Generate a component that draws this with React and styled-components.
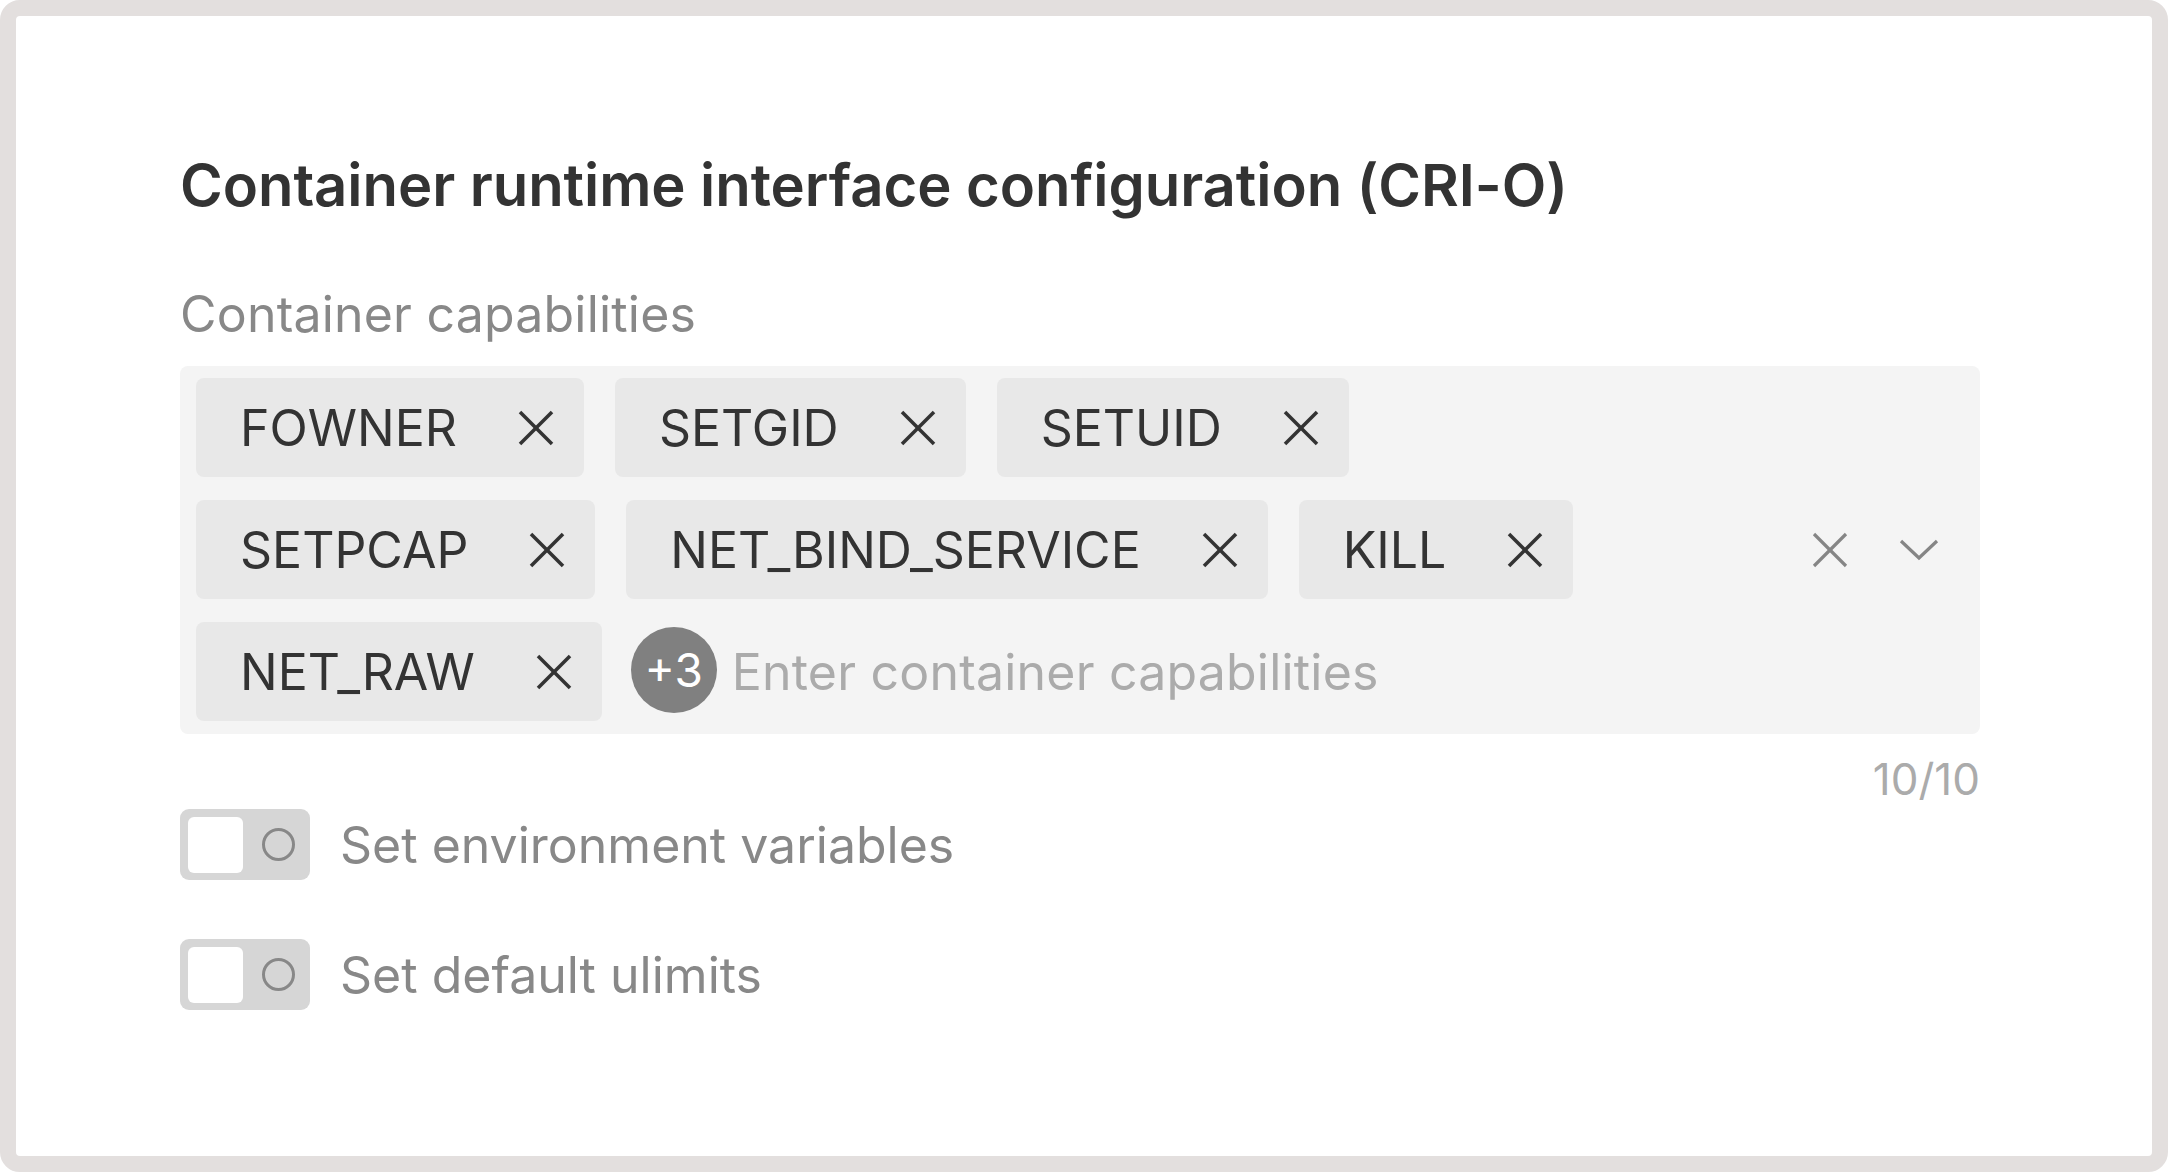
import React from 'react'
import styled, { createGlobalStyle } from 'styled-components'

const GlobalStyle = createGlobalStyle`
  html, body {
    margin: 0;
    padding: 0;
    background: #ffffff;
  }
  body {
    font-family: "Inter", "Noto Sans", sans-serif;
  }
  * {
    box-sizing: border-box;
  }
`

const Frame = styled.div`
  width: 2168px;
  height: 1172px;
  border: 16px solid #e3dfde;
  border-radius: 20px;
  background: #ffffff;
  padding: 140px 172px 0 164px;
  display: flex;
  flex-direction: column;
`

const Title = styled.h2`
  margin: 0;
  font-size: 58px;
  line-height: 58px;
  font-weight: 600;
  color: #333333;
  letter-spacing: -0.05px;
`

const FieldLabel = styled.label`
  margin-top: 75px;
  font-size: 50px;
  line-height: 50px;
  color: #888888;
  letter-spacing: 0.2px;
`

const SelectBox = styled.div`
  margin-top: 27px;
  display: flex;
  align-items: center;
  background: #f4f4f4;
  border-radius: 8px;
  padding: 12px 0 13px 16px;
`

const TagArea = styled.div`
  flex: 1;
  display: flex;
  flex-wrap: wrap;
  row-gap: 23px;
  column-gap: 31px;
`

const Tag = styled.div`
  height: 99px;
  display: flex;
  align-items: center;
  gap: 61px;
  padding: 0 30px 0 44px;
  background: #e8e8e8;
  border-radius: 8px;
  font-size: 50px;
  color: #333333;
  white-space: nowrap;
`

const InputGroup = styled.div`
  flex: 1 1 740px;
  display: flex;
  align-items: center;
  gap: 15px;
  height: 99px;
  margin-left: -2px;
`

const MoreBadge = styled.span`
  flex: none;
  width: 86px;
  height: 86px;
  border-radius: 50%;
  background: #808080;
  color: #ffffff;
  font-size: 46px;
  display: flex;
  align-items: center;
  justify-content: center;
  margin-top: -4px;
`

const TextInput = styled.input`
  flex: 1;
  min-width: 0;
  border: none;
  outline: none;
  background: transparent;
  font-family: inherit;
  font-size: 50px;
  letter-spacing: 0.2px;
  color: #333333;
  padding: 0;

  &::placeholder {
    color: #ababab;
  }
`

const Indicators = styled.div`
  flex: none;
  display: flex;
  align-items: center;
  gap: 51px;
  padding: 0 41px 0 50px;
`

const IconButton = styled.button`
  border: none;
  background: none;
  padding: 0;
  display: flex;
  cursor: pointer;
  color: ${p => p.$muted ? '#858585' : '#333333'};
`

const Counter = styled.div`
  margin-top: 23px;
  align-self: flex-end;
  font-size: 44px;
  line-height: 44px;
  color: #ababab;
`

const SwitchRow = styled.label`
  display: flex;
  align-items: center;
  gap: 30px;
  margin-top: ${p => p.$first ? '8px' : '59px'};
  font-size: 50px;
  color: #888888;
`

const Track = styled.span`
  width: 130px;
  height: 71px;
  border-radius: 9px;
  background: #d6d6d6;
  display: flex;
  align-items: center;
  justify-content: space-between;
  padding: 0 15px 0 8px;
`

const Knob = styled.span`
  width: 55px;
  height: 56px;
  border-radius: 6px;
  background: #ffffff;
`

const OffMark = styled.span`
  width: 33px;
  height: 33px;
  border-radius: 50%;
  border: 3px solid #888888;
`

function Cross({ size = 36, width = 3.6 }) {
  return (
    <svg width={size} height={size} viewBox="0 0 36 36" fill="none" stroke="currentColor" strokeWidth={width}>
      <line x1="2" y1="2" x2="34" y2="34" />
      <line x1="34" y1="2" x2="2" y2="34" />
    </svg>
  )
}

function Chevron() {
  return (
    <svg width="40" height="22" viewBox="0 0 40 22" fill="none" stroke="currentColor" strokeWidth="3.2">
      <polyline points="2,2 20,19 38,2" />
    </svg>
  )
}

const capabilities = ['FOWNER', 'SETGID', 'SETUID', 'SETPCAP', 'NET_BIND_SERVICE', 'KILL', 'NET_RAW']

function Switch({ label, first }) {
  return (
    <SwitchRow $first={first}>
      <Track>
        <Knob />
        <OffMark />
      </Track>
      {label}
    </SwitchRow>
  )
}

export default function App() {
  return (
    <>
      <GlobalStyle />
      <Frame>
        <Title>Container runtime interface configuration (CRI-O)</Title>
        <FieldLabel>Container capabilities</FieldLabel>
        <SelectBox>
          <TagArea>
            {capabilities.map(cap => (
              <Tag key={cap}>
                {cap}
                <IconButton aria-label={`Remove ${cap}`}>
                  <Cross />
                </IconButton>
              </Tag>
            ))}
            <InputGroup>
              <MoreBadge>+3</MoreBadge>
              <TextInput placeholder="Enter container capabilities" />
            </InputGroup>
          </TagArea>
          <Indicators>
            <IconButton $muted aria-label="Clear all">
              <Cross width={3.2} />
            </IconButton>
            <IconButton $muted aria-label="Open menu">
              <Chevron />
            </IconButton>
          </Indicators>
        </SelectBox>
        <Counter>10/10</Counter>
        <Switch first label="Set environment variables" />
        <Switch label="Set default ulimits" />
      </Frame>
    </>
  )
}
